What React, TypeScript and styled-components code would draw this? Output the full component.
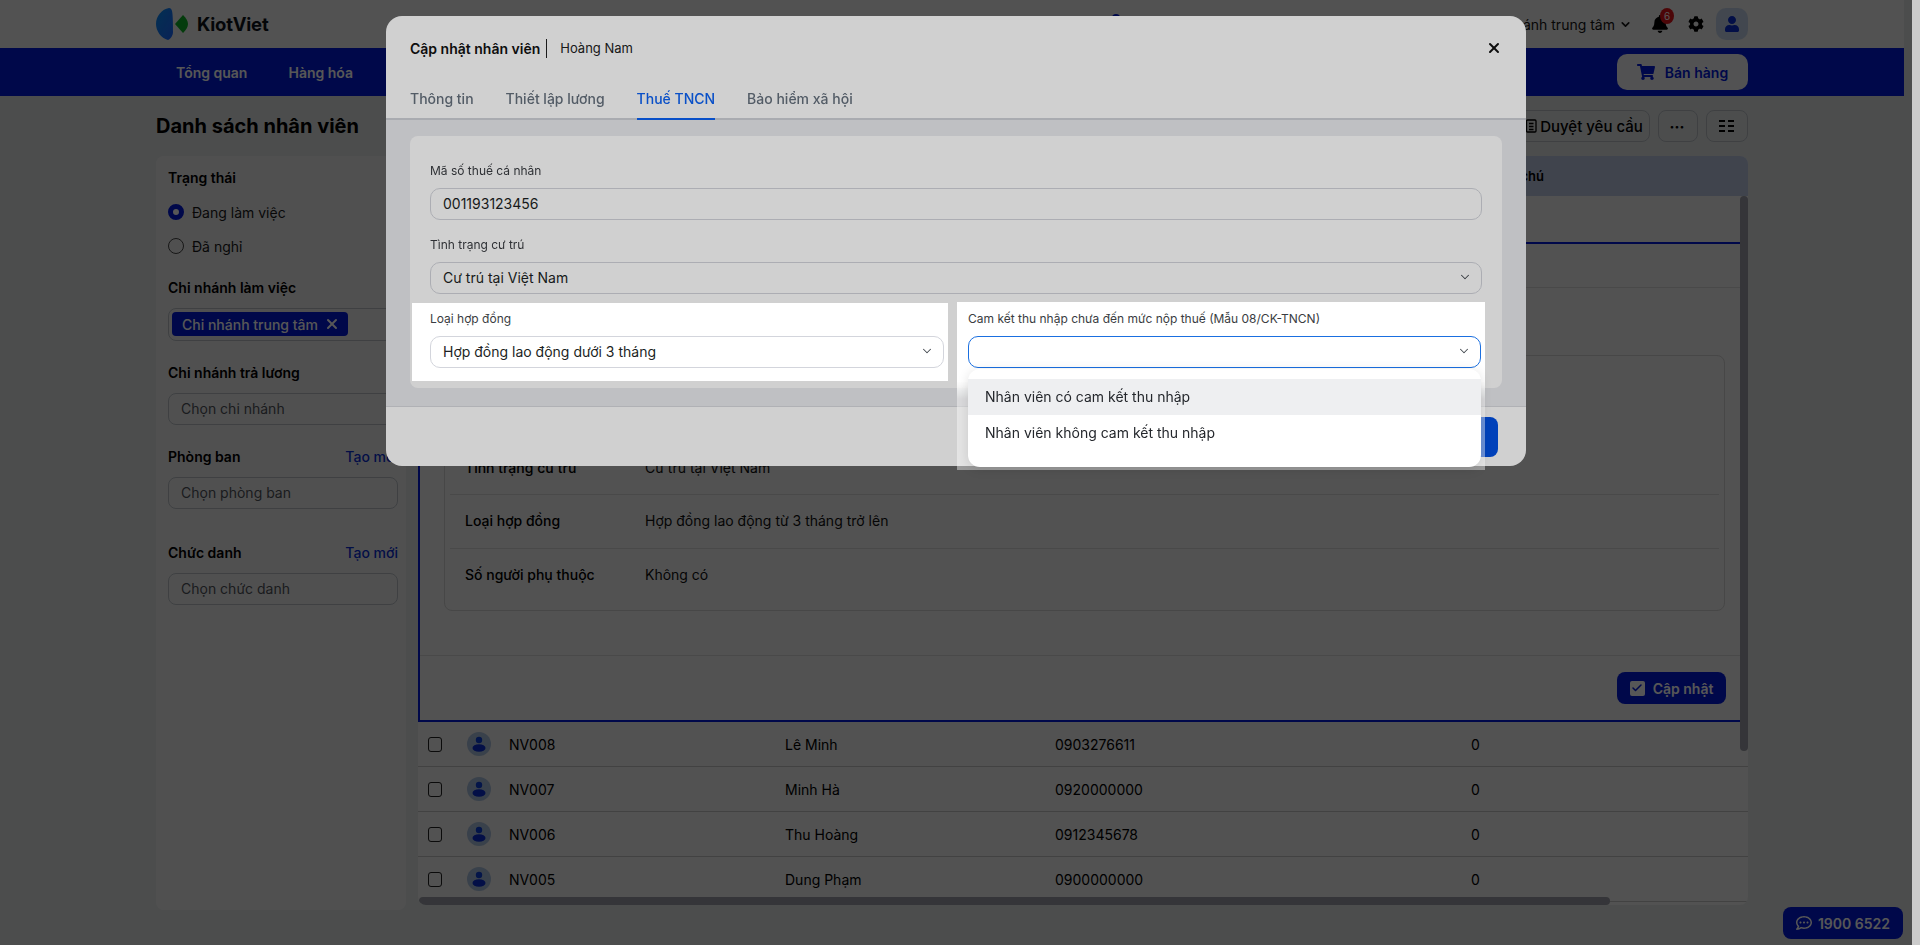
import React from 'react';
import styled, { createGlobalStyle } from 'styled-components';
import { ChevronDown, X, Check } from 'lucide-react';
import { FaBell, FaCog, FaUser, FaShoppingCart, FaRegCommentDots } from 'react-icons/fa';

const NAVY = '#0018d8';
const INK = '#111111';

const GlobalStyle = createGlobalStyle`
  html, body {
    margin: 0;
    height: 100%;
    overflow: hidden;
  }
  * {
    box-sizing: border-box;
  }
  body {
    font-family: Inter, "Liberation Sans", sans-serif;
    font-size: 14px;
    color: ${INK};
    background: #dfe3e3;
  }
`;

const Page = styled.div`
  width: 1904px;
  height: 945px;
  overflow: hidden;
`;

const Header = styled.header`
  height: 48px;
  background: #f0f0f0;
  padding: 0 156px;
  display: flex;
  align-items: center;
`;

const Brand = styled.div`
  display: flex;
  align-items: center;
  gap: 8px;
  font-size: 18.5px;
  font-weight: 700;
  letter-spacing: -0.2px;
  color: #10141c;
`;

const HeaderDot = styled.span`
  width: 8px;
  height: 8px;
  margin: -12px 0 0 843px;
  border-radius: 50%;
  background: ${NAVY};
`;

const HeaderRight = styled.div`
  margin-left: auto;
  display: flex;
  align-items: center;
`;

const BranchName = styled.span`
  display: flex;
  align-items: center;
  gap: 4px;
  font-size: 14px;
  color: #151515;
`;

const BellWrap = styled.span`
  position: relative;
  margin-left: 19px;
  display: flex;
  font-size: 18px;
  color: #000;
`;

const BellBadge = styled.span`
  position: absolute;
  top: -7px;
  right: -5px;
  width: 14px;
  height: 16px;
  border-radius: 50%;
  background: #e0131a;
  color: #fff;
  font-size: 10px;
  line-height: 16px;
  text-align: center;
`;

const GearIcon = styled(FaCog)`
  margin-left: 19px;
  font-size: 16px;
  color: #000;
`;

const UserBox = styled.span`
  width: 32px;
  height: 32px;
  margin-left: 12px;
  border-radius: 10px;
  background: #c3d2e6;
  display: flex;
  align-items: center;
  justify-content: center;
  font-size: 16px;
  color: #0a2fd0;
`;

const NavBar = styled.nav`
  height: 48px;
  background: ${NAVY};
  padding: 0 156px 0 176px;
  display: flex;
  align-items: center;
  gap: 41px;
  color: #fff;
  font-weight: 600;
`;

const SellButton = styled.button`
  margin-left: auto;
  width: 131px;
  height: 36px;
  border: 0;
  border-radius: 10px;
  background: #f0f0f4;
  color: ${NAVY};
  font: 600 14px Inter, sans-serif;
  display: flex;
  align-items: center;
  justify-content: center;
  gap: 10px;
`;

const Main = styled.main`
  padding: 14px 156px 0;
`;

const TitleRow = styled.div`
  height: 32px;
  display: flex;
  align-items: center;
  gap: 8px;
`;

const PageTitle = styled.h1`
  margin: 0 auto 0 0;
  font-size: 20px;
  font-weight: 700;
  color: #000;
`;

const OutlineButton = styled.button<{ $width: number }>`
  width: ${p => p.$width}px;
  height: 32px;
  border: 1px solid #b9bdc4;
  border-radius: 8px;
  background: transparent;
  color: #000;
  font: 500 15px Inter, sans-serif;
  display: flex;
  align-items: center;
  justify-content: center;
  gap: 3px;
  padding: 0 2px 0 0;
`;

const MoreDots = styled.span`
  font-weight: 800;
  font-size: 14px;
`;

const Content = styled.div`
  margin-top: 14px;
  display: flex;
  align-items: flex-start;
  gap: 12px;
`;

const Sidebar = styled.aside`
  width: 250px;
  height: 754px;
  padding: 12px 8px 0 12px;
  background: #ececec;
  border-radius: 8px;
  display: flex;
  flex-direction: column;
`;

const SideLabel = styled.div<{ $top?: number }>`
  margin-top: ${p => p.$top ?? 0}px;
  height: 20px;
  line-height: 20px;
  font-weight: 600;
  color: #000;
  display: flex;
  justify-content: space-between;
`;

const CreateLink = styled.span`
  font-weight: 500;
  color: #0a2fd0;
`;

const RadioRow = styled.label<{ $top?: number }>`
  margin-top: ${p => p.$top ?? 0}px;
  height: 34px;
  display: flex;
  align-items: center;
  gap: 8px;
  color: #1a1a1a;
`;

const RadioDot = styled.span<{ $on?: boolean }>`
  width: 16px;
  height: 16px;
  border-radius: 50%;
  background: ${p => (p.$on ? '#fff' : 'transparent')};
  border: ${p => (p.$on ? `5px solid ${NAVY}` : '1.5px solid #444')};
`;

const ChipField = styled.div`
  margin-top: 10px;
  height: 33px;
  padding: 3px;
  border: 1px solid #b9bdc4;
  border-radius: 8px;
`;

const Chip = styled.span`
  width: 176px;
  height: 24px;
  padding: 0 8px 0 10px;
  border-radius: 4px;
  background: ${NAVY};
  color: #fff;
  font-weight: 500;
  display: flex;
  align-items: center;
  justify-content: space-between;
`;

const SideInput = styled.div`
  margin-top: 10px;
  height: 32px;
  padding: 0 12px;
  border: 1px solid #b9bdc4;
  border-radius: 8px;
  line-height: 30px;
  color: #50535a;
`;

const TablePanel = styled.section`
  position: relative;
  width: 1330px;
  height: 749px;
  background: #f0f0f0;
  border-radius: 8px;
  overflow: hidden;
`;

const TableHead = styled.div`
  height: 40px;
  background: #bcc8e2;
  display: flex;
  align-items: center;
  padding-left: 10px;
  font-size: 13px;
  font-weight: 600;
  color: #000;
`;

const NoteHead = styled.span`
  margin-left: auto;
  margin-right: 204px;
`;

const FirstRow = styled.div`
  height: 46px;
`;

const DetailPanel = styled.div`
  width: 1322px;
  height: 480px;
  border: 2px solid ${NAVY};
  border-width: 2px 0 2px 2px;
  display: flex;
  flex-direction: column;
`;

const DetailTabs = styled.div`
  height: 44px;
  border-bottom: 1px solid #d6d6d6;
`;

const InfoCard = styled.div`
  margin: 67px 15px 0 24px;
  height: 256px;
  padding: 87px 5px 0;
  border: 1px solid #cfcfcf;
  border-radius: 8px;
  display: flex;
  flex-direction: column;
`;

const InfoRow = styled.div<{ $height: number; $last?: boolean }>`
  height: ${p => p.$height}px;
  padding: 0 15px ${p => (p.$last ? 4 : 2)}px;
  display: flex;
  align-items: center;
  border-bottom: ${p => (p.$last ? '0' : '1px solid #d6d6d6')};
`;

const InfoLabel = styled.span`
  width: 180px;
  font-weight: 500;
  color: #000;
`;

const DetailFooter = styled.div`
  margin-top: 44px;
  flex: 1;
  padding: 16px 14px 0 0;
  border-top: 1px solid #d6d6d6;
  display: flex;
  justify-content: flex-end;
`;

const UpdateButton = styled.button`
  width: 109px;
  height: 32px;
  border: 0;
  border-radius: 8px;
  background: ${NAVY};
  color: #fff;
  font: 600 14px Inter, sans-serif;
  display: flex;
  align-items: center;
  justify-content: center;
  gap: 8px;
  padding: 0;
`;

const CheckTile = styled.span`
  width: 15px;
  height: 15px;
  border-radius: 2px;
  background: #fff;
  display: flex;
  align-items: center;
  justify-content: center;
  color: ${NAVY};
`;

const Row = styled.div`
  height: 45px;
  padding-left: 10px;
  display: flex;
  align-items: center;
  border-bottom: 1px solid #c4c4c4;
  color: #000;
`;

const CheckCell = styled.span`
  width: 39px;
  display: flex;
`;

const CheckBox = styled.span`
  width: 14px;
  height: 15px;
  border: 1.5px solid #222;
  border-radius: 3px;
`;

const AvatarCell = styled.span`
  width: 42px;
  display: flex;
`;

const Avatar = styled.span`
  width: 24px;
  height: 24px;
  border-radius: 50%;
  background: #a9bedb;
  display: flex;
  align-items: center;
  justify-content: center;
`;

const Cell = styled.span<{ $width: number }>`
  width: ${p => p.$width}px;
  flex-shrink: 0;
`;

const VScroll = styled.div`
  position: absolute;
  right: 0;
  top: 40px;
  width: 8px;
  height: 555px;
  border-radius: 4px;
  background: #9b9da6;
`;

const HScroll = styled.div`
  position: absolute;
  left: 1px;
  bottom: 0;
  width: 1191px;
  height: 8px;
  border-radius: 4px;
  background: #9b9da6;
`;

const ChatButton = styled.button`
  position: fixed;
  left: 1783px;
  top: 907px;
  width: 120px;
  height: 32px;
  border: 0;
  border-radius: 8px;
  background: ${NAVY};
  color: #fff;
  font: 600 14px Inter, sans-serif;
  display: flex;
  align-items: center;
  justify-content: center;
  gap: 6px;
  padding: 0;
`;

const PageScroll = styled.div`
  position: fixed;
  top: 0;
  right: 0;
  bottom: 0;
  width: 8px;
  background: #cbcbcb;
  z-index: 20;
`;

const Backdrop = styled.div`
  position: fixed;
  inset: 0;
  background: rgba(0, 0, 0, 0.58);
`;

/* absolute with no z-index: the spotlit fields inside must stack above Dim */
const Modal = styled.div`
  position: absolute;
  left: 386px;
  top: 16px;
  width: 1140px;
  height: 450px;
  background: #fff;
  border-radius: 16px;
  display: flex;
  flex-direction: column;
`;

const ModalHead = styled.div`
  height: 64px;
  padding: 0 24px;
  display: flex;
  align-items: center;
`;

const ModalTitle = styled.strong`
  font-size: 14px;
  font-weight: 600;
  color: #111;
  padding-right: 6px;
  border-right: 1px solid #222;
  line-height: 19px;
`;

const ModalSub = styled.span`
  margin-left: 13px;
  font-size: 13px;
  color: #222;
`;

const CloseIcon = styled(X)`
  margin-left: auto;
  margin-right: 0;
  color: #111;
`;

const TabRow = styled.div`
  height: 40px;
  padding: 0 24px;
  display: flex;
  gap: 32px;
  border-bottom: 2px solid #d0d2d8;
`;

const Tab = styled.span<{ $active?: boolean }>`
  height: 40px;
  padding-top: 10px;
  font-weight: 500;
  color: ${p => (p.$active ? '#0c62f5' : '#66717e')};
  border-bottom: 2px solid ${p => (p.$active ? '#0c62f5' : 'transparent')};
`;

const ModalBody = styled.div`
  flex: 1;
  padding: 16px 24px 18px;
  background: #ebecef;
`;

const FormCard = styled.div`
  height: 252px;
  padding: 26px 20px 0;
  background: #fff;
  border-radius: 8px;
`;

const FieldLabel = styled.div<{ $top?: number }>`
  margin-top: ${p => p.$top ?? 0}px;
  height: 18px;
  line-height: 18px;
  font-size: 12px;
  color: #3a3d42;
`;

const InputBox = styled.div<{ $focus?: boolean }>`
  position: relative;
  margin-top: 8px;
  height: 32px;
  padding: 0 12px 2px;
  border: 1px solid ${p => (p.$focus ? '#1a6fe0' : '#d3d5dc')};
  border-radius: 10px;
  background: #fff;
  display: flex;
  align-items: center;
  justify-content: space-between;
  color: #1c1f24;
`;

const ArrowIcon = styled(ChevronDown)`
  color: #444950;
  margin-right: -3px;
`;

const SpotRow = styled.div`
  margin: 9px -3px 0 -18px;
  display: flex;
  align-items: flex-start;
  gap: 9px;
`;

const SpotField = styled.div<{ $width: number; $left: number; $raised?: boolean }>`
  position: relative;
  z-index: 6;
  width: ${p => p.$width}px;
  height: ${p => (p.$raised ? 79 : 78)}px;
  margin-top: ${p => (p.$raised ? -1 : 0)}px;
  padding: ${p => (p.$raised ? 8 : 7)}px 4px 0 ${p => p.$left}px;
  background: #fff;
`;

const SpotTail = styled.div`
  position: absolute;
  left: 0;
  right: 0;
  top: 100%;
  height: 89px;
  background: linear-gradient(#ffffff, rgba(255, 255, 255, 0.42) 18px);
`;

const Dropdown = styled.ul`
  position: absolute;
  left: -1px;
  right: -1px;
  top: calc(100% + 2px);
  height: 98px;
  margin: 0;
  padding: 10px 0 0;
  list-style: none;
  background: #fff;
  border-radius: 12px;
  box-shadow: 0 2px 12px rgba(0, 0, 0, 0.12);
`;

const Option = styled.li<{ $active?: boolean }>`
  height: 36px;
  padding-left: 17px;
  line-height: 36px;
  color: #24272c;
  background: ${p => (p.$active ? '#eeeff1' : 'transparent')};
`;

const ModalFoot = styled.div`
  height: 60px;
  padding: 10px 28px 0;
  border-top: 1px solid #d8dade;
  display: flex;
  justify-content: flex-end;
`;

const SaveButton = styled.button`
  width: 96px;
  height: 40px;
  border: 0;
  border-radius: 8px;
  background: #0050e4;
  color: #fff;
  font: 600 14px Inter, sans-serif;
`;

const Dim = styled.div`
  position: fixed;
  inset: 0;
  z-index: 5;
  background: rgba(0, 0, 0, 0.184);
`;

const employees = [
  { code: 'NV008', name: 'Lê Minh', phone: '0903276611' },
  { code: 'NV007', name: 'Minh Hà', phone: '0920000000' },
  { code: 'NV006', name: 'Thu Hoàng', phone: '0912345678' },
  { code: 'NV005', name: 'Dung Phạm', phone: '0900000000' },
];

const Logo = () => (
  <svg width="33" height="32" viewBox="0 0 33 32">
    <defs>
      <linearGradient id="lens" x1="0" y1="0" x2="1" y2="1">
        <stop offset="0" stopColor="#0a8cf0" />
        <stop offset="1" stopColor="#1f66ff" />
      </linearGradient>
    </defs>
    <path d="M13 0C6 1 0 8 0 16c0 7 5 14 12 16 3-1 5-5 5-8 0-3 0-18-1-21-.4-2-1.500-3-3-3z" fill="url(#lens)" />
    <path d="M19 16l8-9c3 3 5 6 5 9s-2 6-5 9z" fill="#10b026" />
  </svg>
);

const PersonMark = () => (
  <svg width="14" height="16" viewBox="0 0 14 16">
    <circle cx="7" cy="4" r="3.200" fill="#0a3fd6" />
    <ellipse cx="7" cy="12" rx="6.500" ry="3.800" fill="#0a2fd0" />
  </svg>
);

const ListIcon = () => (
  <svg width="15" height="14" viewBox="0 0 15 14" fill="#000">
    <rect x="0" y="1" width="6" height="2" />
    <rect x="9" y="1" width="6" height="2" />
    <rect x="0" y="6" width="6" height="2" />
    <rect x="9" y="6" width="6" height="2" />
    <rect x="0" y="11" width="6" height="2" />
    <rect x="9" y="11" width="6" height="2" />
  </svg>
);

const ApproveIcon = () => (
  <svg width="13" height="14" viewBox="0 0 13 14" fill="none" stroke="#000" strokeWidth="1.300">
    <rect x="2.500" y="1" width="9.500" height="12" rx="1" />
    <path d="M5 4.500h4.500M5 7.500h4.500M5 10.500h4.500" />
  </svg>
);

const App: React.FC = () => {
  return (
    <>
      <GlobalStyle />
      <Page>
        <Header>
          <Brand>
            <Logo />
            KiotViet
          </Brand>
          <HeaderDot />
          <HeaderRight>
            <BranchName>
              Chi nhánh trung tâm
              <ChevronDown size={13} strokeWidth={3} />
            </BranchName>
            <BellWrap>
              <FaBell />
              <BellBadge>6</BellBadge>
            </BellWrap>
            <GearIcon />
            <UserBox>
              <FaUser />
            </UserBox>
          </HeaderRight>
        </Header>
        <NavBar>
          <span>Tổng quan</span>
          <span>Hàng hóa</span>
          <SellButton>
            <FaShoppingCart size={18} />
            Bán hàng
          </SellButton>
        </NavBar>
        <Main>
          <TitleRow>
            <PageTitle>Danh sách nhân viên</PageTitle>
            <OutlineButton $width={131}>
              <ApproveIcon />
              Duyệt yêu cầu
            </OutlineButton>
            <OutlineButton $width={40}>
              <MoreDots>···</MoreDots>
            </OutlineButton>
            <OutlineButton $width={42}>
              <ListIcon />
            </OutlineButton>
          </TitleRow>
          <Content>
            <Sidebar>
              <SideLabel>Trạng thái</SideLabel>
              <RadioRow $top={7}>
                <RadioDot $on />
                Đang làm việc
              </RadioRow>
              <RadioRow>
                <RadioDot />
                Đã nghỉ
              </RadioRow>
              <SideLabel $top={15}>Chi nhánh làm việc</SideLabel>
              <ChipField>
                <Chip>
                  Chi nhánh trung tâm
                  <X size={16} strokeWidth={3} />
                </Chip>
              </ChipField>
              <SideLabel $top={22}>Chi nhánh trả lương</SideLabel>
              <SideInput>Chọn chi nhánh</SideInput>
              <SideLabel $top={22}>
                Phòng ban
                <CreateLink>Tạo mới</CreateLink>
              </SideLabel>
              <SideInput>Chọn phòng ban</SideInput>
              <SideLabel $top={34}>
                Chức danh
                <CreateLink>Tạo mới</CreateLink>
              </SideLabel>
              <SideInput>Chọn chức danh</SideInput>
            </Sidebar>
            <TablePanel>
              <TableHead>
                <NoteHead>Ghi chú</NoteHead>
              </TableHead>
              <FirstRow />
              <DetailPanel>
                <DetailTabs />
                <InfoCard>
                  <InfoRow $height={52}>
                    <InfoLabel>Tình trạng cư trú</InfoLabel>
                    Cư trú tại Việt Nam
                  </InfoRow>
                  <InfoRow $height={54}>
                    <InfoLabel>Loại hợp đồng</InfoLabel>
                    Hợp đồng lao động từ 3 tháng trở lên
                  </InfoRow>
                  <InfoRow $height={55} $last>
                    <InfoLabel>Số người phụ thuộc</InfoLabel>
                    Không có
                  </InfoRow>
                </InfoCard>
                <DetailFooter>
                  <UpdateButton>
                    <CheckTile>
                      <Check size={12} strokeWidth={3} />
                    </CheckTile>
                    Cập nhật
                  </UpdateButton>
                </DetailFooter>
              </DetailPanel>
              {employees.map(item => (
                <Row key={item.code}>
                  <CheckCell>
                    <CheckBox />
                  </CheckCell>
                  <AvatarCell>
                    <Avatar>
                      <PersonMark />
                    </Avatar>
                  </AvatarCell>
                  <Cell $width={276}>{item.code}</Cell>
                  <Cell $width={270}>{item.name}</Cell>
                  <Cell $width={416}>{item.phone}</Cell>
                  <span>0</span>
                </Row>
              ))}
              <VScroll />
              <HScroll />
            </TablePanel>
          </Content>
        </Main>
        <ChatButton>
          <FaRegCommentDots size={16} />
          1900 6522
        </ChatButton>
      </Page>
      <PageScroll />
      <Backdrop />
      <Modal>
        <ModalHead>
          <ModalTitle>Cập nhật nhân viên</ModalTitle>
          <ModalSub>Hoàng Nam</ModalSub>
          <CloseIcon size={16} strokeWidth={3} />
        </ModalHead>
        <TabRow>
          <Tab>Thông tin</Tab>
          <Tab>Thiết lập lương</Tab>
          <Tab $active>Thuế TNCN</Tab>
          <Tab>Bảo hiểm xã hội</Tab>
        </TabRow>
        <ModalBody>
          <FormCard>
            <FieldLabel>Mã số thuế cá nhân</FieldLabel>
            <InputBox>001193123456</InputBox>
            <FieldLabel $top={16}>Tình trạng cư trú</FieldLabel>
            <InputBox>
              Cư trú tại Việt Nam
              <ArrowIcon size={14} strokeWidth={1.75} />
            </InputBox>
            <SpotRow>
              <SpotField $width={536} $left={18}>
                <FieldLabel>Loại hợp đồng</FieldLabel>
                <InputBox>
                  Hợp đồng lao động dưới 3 tháng
                  <ArrowIcon size={14} strokeWidth={1.75} />
                </InputBox>
              </SpotField>
              <SpotField $width={528} $left={11} $raised>
                <SpotTail />
                <FieldLabel>Cam kết thu nhập chưa đến mức nộp thuế (Mẫu 08/CK-TNCN)</FieldLabel>
                <InputBox $focus>
                  <span />
                  <ArrowIcon size={14} strokeWidth={1.75} />
                  <Dropdown>
                    <Option $active>Nhân viên có cam kết thu nhập</Option>
                    <Option>Nhân viên không cam kết thu nhập</Option>
                  </Dropdown>
                </InputBox>
              </SpotField>
            </SpotRow>
          </FormCard>
        </ModalBody>
        <ModalFoot>
          <SaveButton>Lưu</SaveButton>
        </ModalFoot>
      </Modal>
      <Dim />
    </>
  );
};

export default App;
